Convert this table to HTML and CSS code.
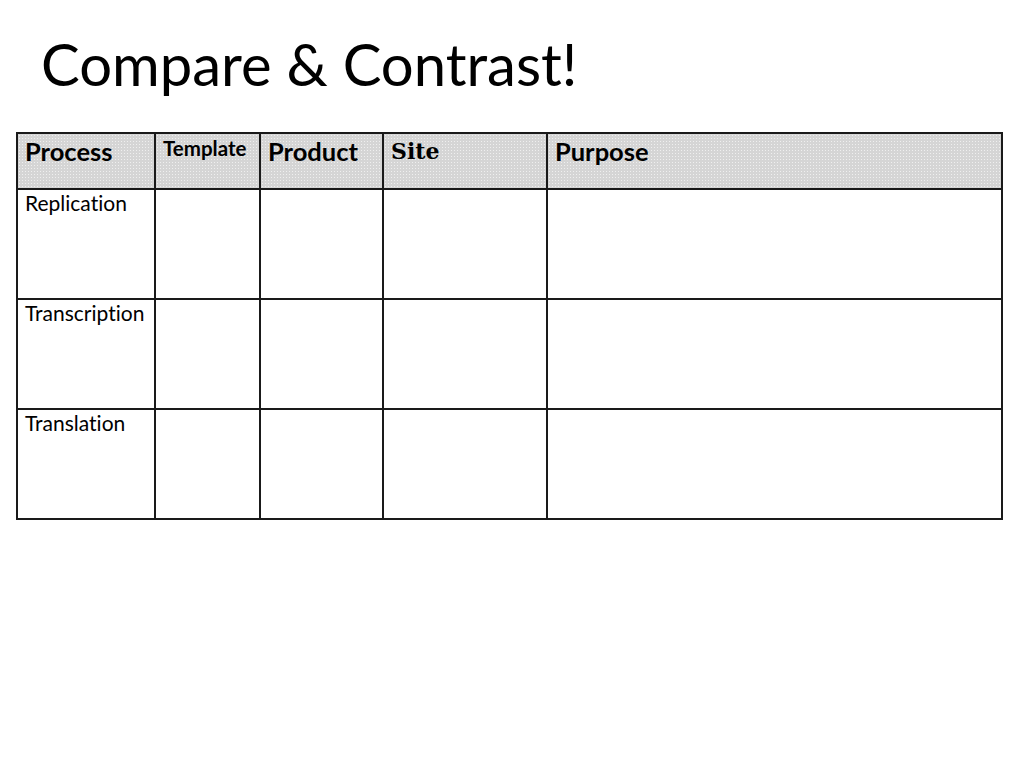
FILE: index.html
```html
<!DOCTYPE html>
<html>
<head>
<meta charset="utf-8">
<link rel="stylesheet" href="styles.css">
</head>
<body>
<div class="slide">
  <h1 class="title">Compare &amp; Contrast!</h1>
  <table class="grid">
    <colgroup>
      <col class="c1"><col class="c2"><col class="c3"><col class="c4"><col class="c5">
    </colgroup>
    <thead>
      <tr class="head">
        <th class="big">Process</th>
        <th class="small">Template</th>
        <th class="big">Product</th>
        <th class="big serif">Site</th>
        <th class="big">Purpose</th>
      </tr>
    </thead>
    <tbody>
      <tr><td>Replication</td><td></td><td></td><td></td><td></td></tr>
      <tr><td>Transcription</td><td></td><td></td><td></td><td></td></tr>
      <tr><td>Translation</td><td></td><td></td><td></td><td></td></tr>
    </tbody>
  </table>
</div>
</body>
</html>
```
FILE: styles.css
```css
html, body {
  margin: 0;
  padding: 0;
  background: #ffffff;
}
.slide {
  width: 1024px;
  height: 768px;
  padding: 0 0 0 16px;
  box-sizing: border-box;
  font-family: "Lato", "Open Sans", sans-serif;
  font-variant-ligatures: none;
  color: #000;
}
.title {
  margin: 0;
  padding: 29px 0 0 25px;
  height: 132px;
  box-sizing: border-box;
  font-weight: 400;
  font-size: 58px;
  line-height: 70px;
}
.grid {
  border-collapse: collapse;
  table-layout: fixed;
  width: 985px;
}
.c1 { width: 138px; }
.c2 { width: 105px; }
.c3 { width: 123px; }
.c4 { width: 164px; }
.c5 { width: 455px; }
.grid th, .grid td {
  border: 2px solid #1a1a1a;
  vertical-align: top;
  text-align: left;
  padding: 2px 4px 0 7px;
}
.head th {
  height: 56px;
  box-sizing: border-box;
  background-color: #d5d5d5;
  background-image: radial-gradient(circle, #efefef 0.7px, transparent 0.9px);
  background-size: 3px 3px;
}
.big {
  font-size: 25.5px;
  font-weight: 700;
  line-height: 30px;
}
.small {
  font-size: 20.5px;
  font-weight: 700;
  line-height: 24px;
  padding-top: 1px;
}
.serif {
  font-family: "DejaVu Serif", "Liberation Serif", serif;
  font-size: 22px;
  padding-top: 4px;
}
.grid td {
  height: 110px;
  box-sizing: border-box;
  font-size: 21px;
  line-height: 26px;
  padding-top: 0;
}
```
